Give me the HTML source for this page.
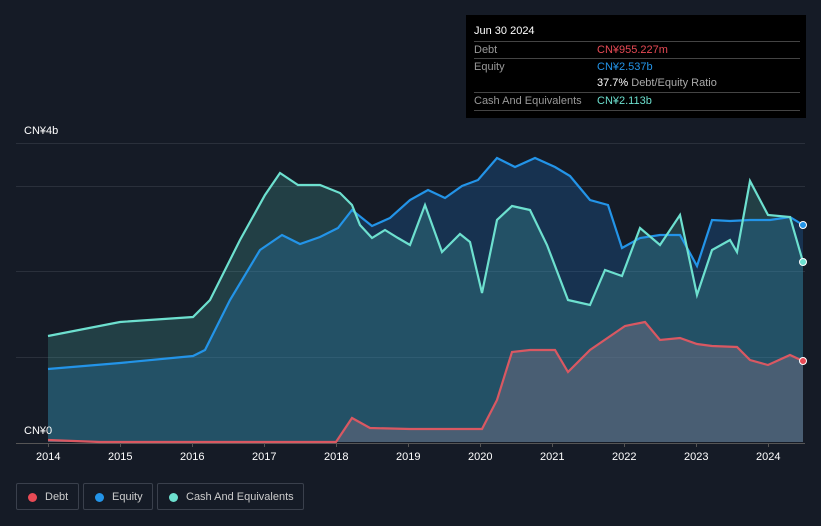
<!DOCTYPE html>
<html><head><style>
body{margin:0;background:#151b26;font-family:"Liberation Sans",sans-serif;width:821px;height:526px;overflow:hidden;position:relative}
.tt{position:absolute;left:466px;top:15px;width:340px;height:103px;background:#000;color:#fff;font-size:11px}
.tt .r{position:absolute;left:8px;right:6px;height:17px;border-top:1px solid #444;color:#999}
.tt .v{position:absolute;left:123px}
.leg{position:absolute;top:483px;height:27px;border:1px solid #3a404c;border-radius:2px;color:#ccc;font-size:11px;line-height:26px;box-sizing:border-box}
.leg i{position:absolute;left:11px;top:9px;width:9px;height:9px;border-radius:50%}
.ax{position:absolute;color:#fff;font-size:11px}
</style></head><body>
<svg width="821" height="526" style="position:absolute;left:0;top:0">
<g stroke="#2a303b" stroke-width="1">
<line x1="16" y1="143.5" x2="805" y2="143.5"/><line x1="16" y1="186.5" x2="805" y2="186.5"/><line x1="16" y1="271.5" x2="805" y2="271.5"/><line x1="16" y1="357.5" x2="805" y2="357.5"/>
</g>
<line x1="16" y1="443.5" x2="805" y2="443.5" stroke="#555"/>
<polygon fill="rgba(30,110,190,0.28)" points="48,369 120,363 193,356 205,350 230,300 260,250 282,235 300,244 320,237 338,228 352,210 372,226 390,218 410,200 428,190 445,198 462,186 478,180 497,158 515,167 535,158 555,167 570,176 590,200 608,205 622,248 640,238 660,235 680,235 697,266 712,220 730,221 750,220 770,220 790,217 803,225 803,442 48,442"/>
<polygon fill="rgba(80,190,180,0.22)" points="48,336 120,322 193,317 210,300 240,240 265,195 280,173 298,185 320,185 340,193 352,205 360,225 372,238 385,230 398,238 410,245 425,205 442,252 460,234 470,242 482,293 497,220 512,206 530,210 547,245 568,300 590,305 605,270 622,276 640,228 660,245 680,215 697,295 712,250 730,240 737,252 750,181 768,215 790,217 803,262 803,442 48,442"/>
<polygon fill="rgba(120,110,130,0.45)" points="48,440 100,442 336,442 352,418 370,428 410,429 482,429 497,400 512,352 530,350 555,350 568,372 590,350 625,326 645,322 660,340 680,338 697,344 712,346 737,347 750,360 768,365 790,355 803,361 803,442 48,442"/>
<polyline fill="none" stroke="#2394e8" stroke-width="2.2" points="48,369 120,363 193,356 205,350 230,300 260,250 282,235 300,244 320,237 338,228 352,210 372,226 390,218 410,200 428,190 445,198 462,186 478,180 497,158 515,167 535,158 555,167 570,176 590,200 608,205 622,248 640,238 660,235 680,235 697,266 712,220 730,221 750,220 770,220 790,217 803,225"/>
<polyline fill="none" stroke="#6de0cf" stroke-width="2.2" points="48,336 120,322 193,317 210,300 240,240 265,195 280,173 298,185 320,185 340,193 352,205 360,225 372,238 385,230 398,238 410,245 425,205 442,252 460,234 470,242 482,293 497,220 512,206 530,210 547,245 568,300 590,305 605,270 622,276 640,228 660,245 680,215 697,295 712,250 730,240 737,252 750,181 768,215 790,217 803,262"/>
<polyline fill="none" stroke="#d95862" stroke-width="2.2" points="48,440 100,442 336,442 352,418 370,428 410,429 482,429 497,400 512,352 530,350 555,350 568,372 590,350 625,326 645,322 660,340 680,338 697,344 712,346 737,347 750,360 768,365 790,355 803,361"/>
<circle cx="803" cy="225" r="3.5" fill="#2394e8" stroke="#fff" stroke-width="1"/>
<circle cx="803" cy="262" r="3.5" fill="#6de0cf" stroke="#fff" stroke-width="1"/>
<circle cx="803" cy="361" r="3.5" fill="#e84a55" stroke="#fff" stroke-width="1"/>
<g stroke="#555"><line x1="48.5" y1="443" x2="48.5" y2="447"/><line x1="120.5" y1="443" x2="120.5" y2="447"/><line x1="192.5" y1="443" x2="192.5" y2="447"/><line x1="264.5" y1="443" x2="264.5" y2="447"/><line x1="336.5" y1="443" x2="336.5" y2="447"/><line x1="408.5" y1="443" x2="408.5" y2="447"/><line x1="480.5" y1="443" x2="480.5" y2="447"/><line x1="552.5" y1="443" x2="552.5" y2="447"/><line x1="624.5" y1="443" x2="624.5" y2="447"/><line x1="696.5" y1="443" x2="696.5" y2="447"/><line x1="768.5" y1="443" x2="768.5" y2="447"/></g>
</svg>
<div class="ax" style="left:24px;top:125px">CN¥4b</div>
<div class="ax" style="left:24px;top:425px">CN¥0</div>
<div class="ax" style="left:36px;top:451px">2014</div><div class="ax" style="left:108px;top:451px">2015</div><div class="ax" style="left:180px;top:451px">2016</div><div class="ax" style="left:252px;top:451px">2017</div><div class="ax" style="left:324px;top:451px">2018</div><div class="ax" style="left:396px;top:451px">2019</div><div class="ax" style="left:468px;top:451px">2020</div><div class="ax" style="left:540px;top:451px">2021</div><div class="ax" style="left:612px;top:451px">2022</div><div class="ax" style="left:684px;top:451px">2023</div><div class="ax" style="left:756px;top:451px">2024</div>
<div class="tt">
<div style="position:absolute;left:8px;top:10px">Jun 30 2024</div>
<div class="r" style="top:26px;line-height:17px">Debt<span class="v" style="color:#e84a55">CN¥955.227m</span></div>
<div class="r" style="top:43px;line-height:17px">Equity<span class="v" style="color:#2394e8">CN¥2.537b</span></div>
<div class="r" style="top:60px;line-height:17px;border-top:none"><span class="v" style="color:#fff">37.7% <span style="color:#aaa">Debt/Equity Ratio</span></span></div>
<div class="r" style="top:77px;line-height:17px">Cash And Equivalents<span class="v" style="color:#6de0cf">CN¥2.113b</span></div>
<div class="r" style="top:95px;height:0"></div>
</div>
<div class="leg" style="left:16px;width:63px"><i style="background:#e84a55"></i><span style="margin-left:28px">Debt</span></div>
<div class="leg" style="left:83px;width:70px"><i style="background:#2394e8"></i><span style="margin-left:28px">Equity</span></div>
<div class="leg" style="left:157px;width:147px"><i style="background:#6de0cf"></i><span style="margin-left:28px">Cash And Equivalents</span></div>
</body></html>
